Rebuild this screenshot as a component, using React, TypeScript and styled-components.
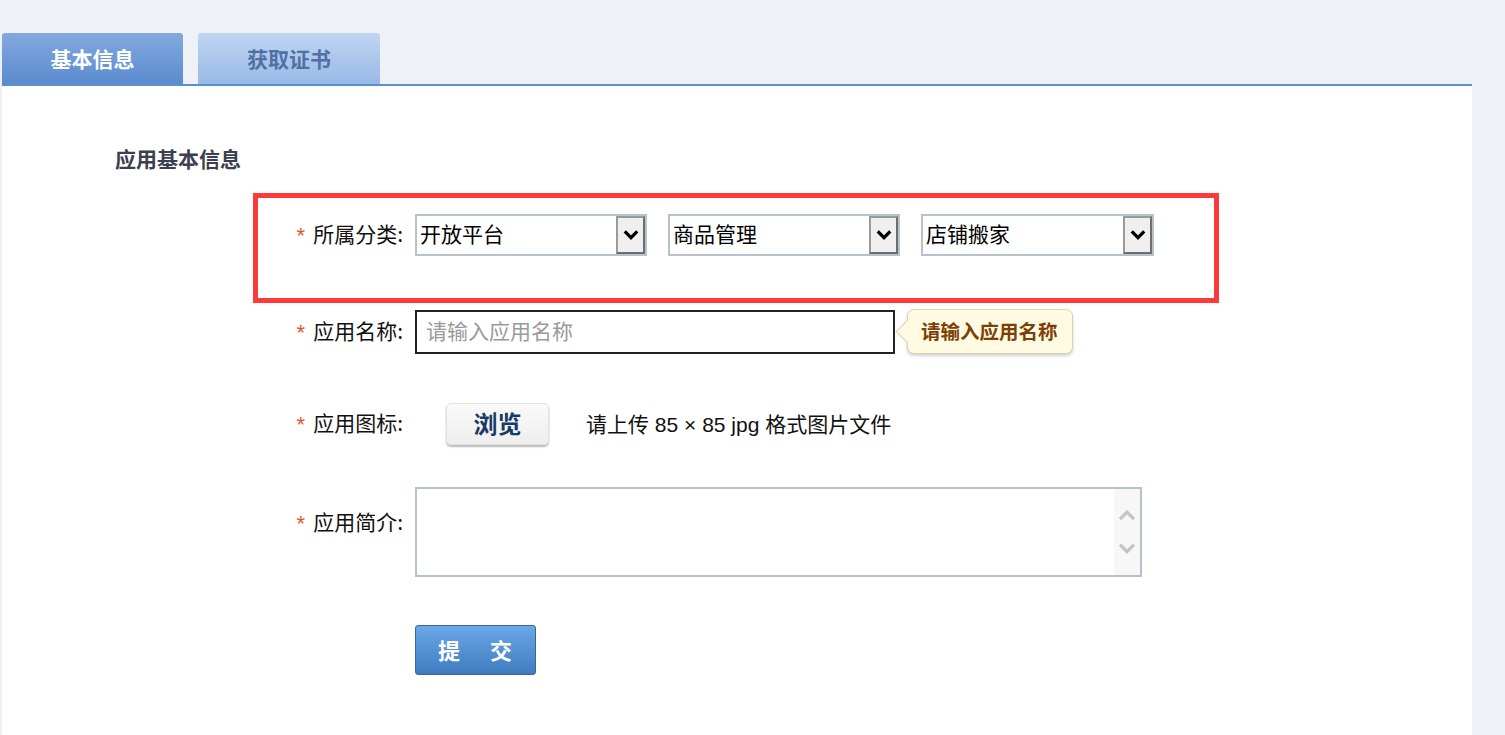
import styled, { createGlobalStyle } from "styled-components";

const GlobalStyle = createGlobalStyle`
  html, body {
    margin: 0;
    padding: 0;
    background: #eef1f6;
    font-family: "Liberation Sans", "Noto Sans CJK SC", sans-serif;
    color: #111;
  }
`;

const Page = styled.div`
  display: flex;
  flex-direction: column;
  padding: 33px 33px 0 2px;
  height: 735px;
  box-sizing: border-box;
  overflow: hidden;
`;

const TabBar = styled.div`
  display: flex;
  gap: 15px;
  height: 51px;
  flex-shrink: 0;
`;

const Tab = styled.div<{ $active?: boolean }>`
  width: ${(p) => (p.$active ? 181 : 182)}px;
  display: flex;
  align-items: center;
  justify-content: center;
  padding-bottom: 2px;
  box-sizing: border-box;
  border-radius: 3px 3px 0 0;
  font-family: "Noto Sans CJK SC", sans-serif;
  font-size: 21px;
  font-weight: 700;
  color: ${(p) => (p.$active ? "#ffffff" : "#5170a3")};
  background: ${(p) =>
    p.$active
      ? "linear-gradient(#83a9dd, #5b8bd0)"
      : "linear-gradient(#c0d5f2, #99b9e7)"};
`;

const Panel = styled.div`
  flex: 1;
  background: #ffffff;
  border-top: 2px solid #5a8fd2;
  padding: 60px 0 0 113px;
`;

const SectionTitle = styled.h2`
  margin: 0;
  font-family: "Noto Sans CJK SC", sans-serif;
  font-size: 21px;
  line-height: 24px;
  font-weight: 700;
  color: #3c3f4f;
`;

const Form = styled.div`
  margin: 23px 0 0 138px;
`;

const Row = styled.div<{ $mt?: number; $top?: boolean }>`
  display: flex;
  align-items: ${(p) => (p.$top ? "flex-start" : "center")};
  margin-top: ${(p) => p.$mt ?? 0}px;
  padding-left: 5px;
`;

const MarkedRow = styled(Row)`
  width: 956px;
  padding: 16px 0 42px 0;
  border: 5px solid #fd3a3a;
`;

const Label = styled.div<{ $pt?: number }>`
  width: 145px;
  margin-right: 12px;
  padding-top: ${(p) => p.$pt ?? 0}px;
  padding-bottom: ${(p) => (p.$pt ? 0 : 4)}px;
  display: flex;
  justify-content: flex-end;
  align-items: center;
  gap: 8px;
  font-family: "Noto Sans CJK SC", sans-serif;
  font-size: 21px;
  line-height: 24px;
  color: #111;
  white-space: nowrap;
`;

const Star = styled.span`
  color: #dc5c26;
  font-family: "Liberation Sans", sans-serif;
  font-size: 22px;
  line-height: 1;
  margin-top: 6px;
`;

const Selects = styled.div`
  display: flex;
  gap: 21px;
`;

const SelectBox = styled.div<{ $w: number }>`
  width: ${(p) => p.$w}px;
  height: 42px;
  box-sizing: border-box;
  border: 2px solid #b6c3cf;
  display: flex;
  align-items: stretch;
  background: #fff;
`;

const SelectText = styled.span`
  flex: 1;
  display: flex;
  align-items: center;
  padding: 0 0 4px 3px;
  font-family: "Noto Sans CJK SC", sans-serif;
  font-size: 21px;
  color: #000;
`;

const ArrowBox = styled.span`
  width: 29px;
  box-sizing: border-box;
  border: 2px solid;
  border-color: #9a9a9a #6e6e6e #6e6e6e #9a9a9a;
  background: #efefef;
  display: flex;
  align-items: center;
  justify-content: center;
`;

const TextInput = styled.input`
  width: 480px;
  height: 44px;
  box-sizing: border-box;
  border: 2px solid #222;
  padding: 0 9px 3px;
  font-family: "Noto Sans CJK SC", sans-serif;
  font-size: 21px;
  outline: none;
  &::placeholder {
    color: #9a9a9a;
  }
`;

const Tip = styled.div`
  position: relative;
  margin-left: 12px;
  height: 45px;
  box-sizing: border-box;
  padding: 0 14px 3px 13px;
  display: flex;
  align-items: center;
  background: #fffbe2;
  border: 1px solid #dcd2ac;
  border-radius: 7px;
  box-shadow: 0 2px 3px rgba(0, 0, 0, 0.18);
  font-family: "Noto Sans CJK SC", sans-serif;
  font-size: 19.5px;
  font-weight: 700;
  color: #7d3f05;
  &::before {
    content: "";
    position: absolute;
    left: -9px;
    top: 13px;
    width: 16px;
    height: 16px;
    background: #fffbe2;
    border-left: 1px solid #dcd2ac;
    border-bottom: 1px solid #dcd2ac;
    transform: rotate(45deg);
  }
`;

const BrowseButton = styled.button`
  margin-left: 31px;
  width: 103px;
  height: 42px;
  padding: 0 0 3px;
  border: 1px solid #e2e2e2;
  border-radius: 5px;
  background: linear-gradient(#fafafa, #eeeeee);
  box-shadow: 0 2px 2px rgba(0, 0, 0, 0.28);
  font-family: "Noto Sans CJK SC", sans-serif;
  font-size: 24px;
  font-weight: 700;
  color: #173a68;
  cursor: pointer;
`;

const Hint = styled.span`
  margin-left: 37px;
  padding-bottom: 3px;
  font-family: "Liberation Sans", "Noto Sans CJK SC", sans-serif;
  font-size: 21px;
  color: #111;
`;

const AreaBox = styled.div`
  width: 727px;
  height: 90px;
  box-sizing: border-box;
  border: 2px solid #b6c3cf;
  display: flex;
`;

const Area = styled.textarea`
  flex: 1;
  border: none;
  resize: none;
  outline: none;
  overflow: hidden;
  padding: 4px;
  font-family: "Noto Sans CJK SC", sans-serif;
  font-size: 18px;
`;

const ScrollTrack = styled.div`
  width: 26px;
  background: #f7f7f7;
  display: flex;
  flex-direction: column;
  align-items: center;
  justify-content: center;
  gap: 22px;
`;

const SubmitButton = styled.button`
  margin-left: 157px;
  width: 121px;
  height: 50px;
  padding: 0 0 3px 3px;
  border: 1px solid #3a6698;
  border-radius: 3px;
  background: linear-gradient(#6aa8e8, #3e7cc0);
  font-family: "Noto Sans CJK SC", sans-serif;
  font-size: 22px;
  font-weight: 700;
  letter-spacing: 4px;
  color: #fff;
  cursor: pointer;
`;

const Chevron = ({ up, color, w = 16, sw = 3 }: { up?: boolean; color: string; w?: number; sw?: number }) => (
  <svg width={w} height={w * 0.6} viewBox="0 0 16 10">
    <path
      d={up ? "M1.5 8.5 L8 2 L14.5 8.5" : "M1.5 1.5 L8 8 L14.5 1.5"}
      fill="none"
      stroke={color}
      strokeWidth={sw}
    />
  </svg>
);

const Select = ({ value, w }: { value: string; w: number }) => (
  <SelectBox $w={w}>
    <SelectText>{value}</SelectText>
    <ArrowBox>
      <Chevron color="#000" w={16} sw={3.4} />
    </ArrowBox>
  </SelectBox>
);

const FieldLabel = ({ text, pt }: { text: string; pt?: number }) => (
  <Label $pt={pt}>
    <Star>*</Star>
    <span>{text}:</span>
  </Label>
);

export default function App() {
  return (
    <>
      <GlobalStyle />
      <Page>
        <TabBar>
          <Tab $active>基本信息</Tab>
          <Tab>获取证书</Tab>
        </TabBar>
        <Panel>
          <SectionTitle>应用基本信息</SectionTitle>
          <Form>
            <MarkedRow>
              <FieldLabel text="所属分类" />
              <Selects>
                <Select value="开放平台" w={232} />
                <Select value="商品管理" w={232} />
                <Select value="店铺搬家" w={233} />
              </Selects>
            </MarkedRow>
            <Row $mt={6}>
              <FieldLabel text="应用名称" />
              <TextInput placeholder="请输入应用名称" />
              <Tip>请输入应用名称</Tip>
            </Row>
            <Row $mt={49}>
              <FieldLabel text="应用图标" />
              <BrowseButton>浏览</BrowseButton>
              <Hint>请上传 85 × 85 jpg 格式图片文件</Hint>
            </Row>
            <Row $mt={42} $top>
              <FieldLabel text="应用简介" pt={20} />
              <AreaBox>
                <Area />
                <ScrollTrack>
                  <Chevron up color="#c4c4c4" w={18} sw={3} />
                  <Chevron color="#c4c4c4" w={18} sw={3} />
                </ScrollTrack>
              </AreaBox>
            </Row>
            <Row $mt={48}>
              <SubmitButton>提　交</SubmitButton>
            </Row>
          </Form>
        </Panel>
      </Page>
    </>
  );
}
